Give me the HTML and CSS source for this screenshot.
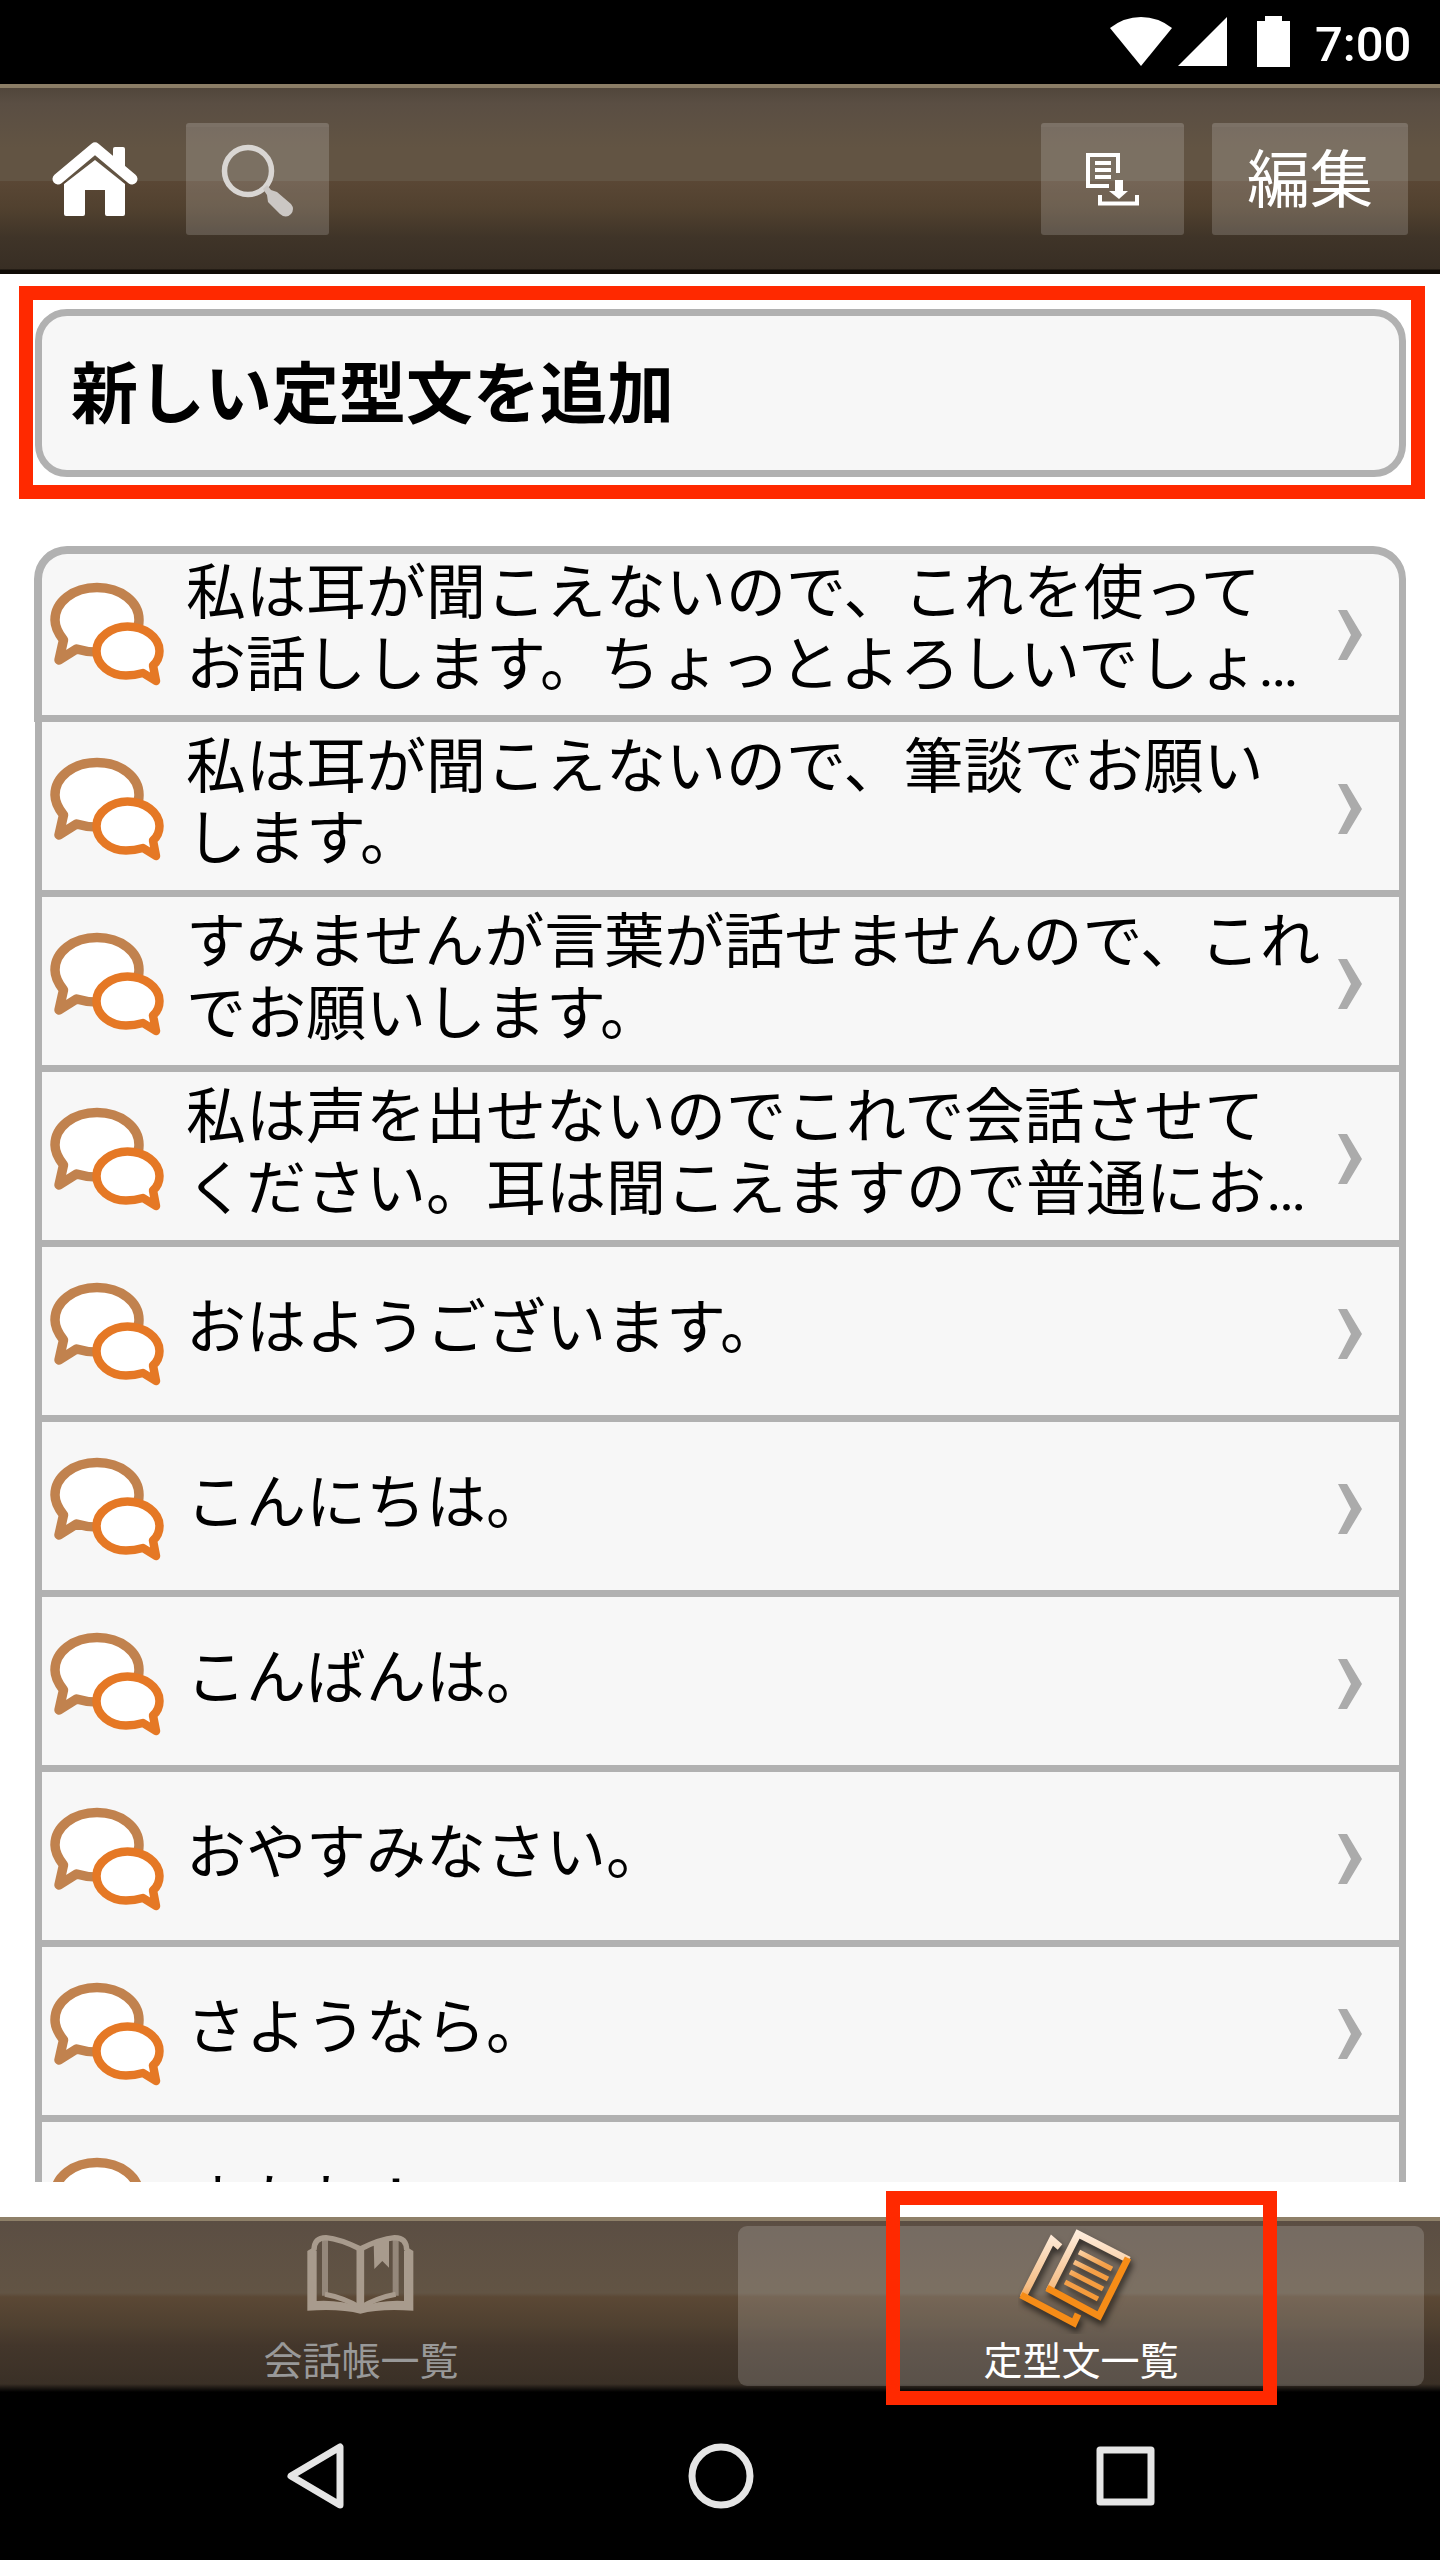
FILE: index.html
```html
<!DOCTYPE html>
<html lang="ja">
<head>
<meta charset="utf-8">
<title>定型文一覧</title>
<link rel="stylesheet" href="styles.css">
</head>
<body>
<svg class="defs" aria-hidden="true">
  <symbol id="bubbles" viewBox="0 0 160 160">
    <g fill="#fff" stroke-linejoin="round">
      <path d="M33.500 80C28 73 25 67 25 60C25 42 43 27.500 67 27.500C91 27.500 109 42 109 60C109 78 91 92 67 92C60 92 53 91 46.500 89L29 100Z" stroke="#c1824e" stroke-width="9.500"/>
      <path d="M97.500 66.500C82 66.500 66.500 77 66.500 91C66.500 105 80 115.500 96 115.500C102 115.500 108 114.500 113 113L126 121L123 105.500C127 102 129.500 97 129.500 91C129.500 77 114 66.500 97.500 66.500Z" stroke="#e57825" stroke-width="8.500"/>
    </g>
  </symbol>
  <symbol id="chevron" viewBox="0 0 26 52">
    <path d="M1 1H10L25 26L10 51H1L14 26Z" fill="#ababab"/>
  </symbol>
</svg>
<div class="screen">
  <div class="status">
    <svg class="status-icons" width="182" height="54" viewBox="0 0 182 54" fill="#fff">
      <path d="M0 12Q14 1 31 1T62 12L31 50Z"/>
      <path d="M68 50L117 1V50Z"/>
      <path d="M147 5H155V0H172V5H180V51H147Z"/>
    </svg>
    <span class="clock">7:00</span>
  </div>

  <header class="header">
    <svg class="home" width="86" height="76" viewBox="0 0 86 76" fill="#fff">
      <path d="M6 37L43 6L80 37" fill="none" stroke="#fff" stroke-width="11" stroke-linecap="round" stroke-linejoin="round"/>
      <path d="M61 7Q61 5 63 5H71Q73 5 73 7V32L61 22Z"/>
      <path d="M43 18L73 42V72Q73 74 71 74H55Q53 74 53 72V48H33V72Q33 74 31 74H14Q12 74 12 72V42Z"/>
    </svg>
    <button class="btn btn-search">
      <svg width="76" height="76" viewBox="0 0 76 76">
        <circle cx="28" cy="28" r="23.500" fill="none" stroke="#d9d6d3" stroke-width="5.500"/>
        <path d="M43 46L47 42L51 47L57 49L71 61Q75 66 71 71Q66 76 60 71L48 59L47 52Z" fill="#cbc7c4"/>
      </svg>
    </button>
    <span class="spacer"></span>
    <button class="btn btn-import">
      <svg width="54" height="54" viewBox="0 0 54 54" fill="none" stroke="#fff">
        <path d="M23 33H2V2H32V20" stroke-width="4"/>
        <path d="M9 10H25M9 17H25M9 24H25" stroke-width="4"/>
        <path d="M14 42V50.500H51V42" stroke-width="4"/>
        <path d="M29 27H37V38H42L33 46L23 38H29Z" fill="#fff" stroke="none"/>
      </svg>
    </button>
    <button class="btn btn-edit">編集</button>
  </header>

  <main class="main">
    <div class="add">新しい定型文を追加</div>
    <ul class="list">
      <li class="row first"><svg class="ico"><use href="#bubbles"/></svg><p>私は耳が聞こえないので、これを使って<br>お話しします。ちょっとよろしいでしょ<span class="dots">…</span></p><svg class="chev"><use href="#chevron"/></svg></li>
      <li class="row"><svg class="ico"><use href="#bubbles"/></svg><p>私は耳が聞こえないので、筆談でお願い<br>します。</p><svg class="chev"><use href="#chevron"/></svg></li>
      <li class="row"><svg class="ico"><use href="#bubbles"/></svg><p>すみませんが言葉が話せませんので、これ<br>でお願いします。</p><svg class="chev"><use href="#chevron"/></svg></li>
      <li class="row"><svg class="ico"><use href="#bubbles"/></svg><p>私は声を出せないのでこれで会話させて<br>ください。耳は聞こえますので普通にお<span class="dots">…</span></p><svg class="chev"><use href="#chevron"/></svg></li>
      <li class="row"><svg class="ico"><use href="#bubbles"/></svg><p>おはようございます。</p><svg class="chev"><use href="#chevron"/></svg></li>
      <li class="row"><svg class="ico"><use href="#bubbles"/></svg><p>こんにちは。</p><svg class="chev"><use href="#chevron"/></svg></li>
      <li class="row"><svg class="ico"><use href="#bubbles"/></svg><p>こんばんは。</p><svg class="chev"><use href="#chevron"/></svg></li>
      <li class="row"><svg class="ico"><use href="#bubbles"/></svg><p>おやすみなさい。</p><svg class="chev"><use href="#chevron"/></svg></li>
      <li class="row"><svg class="ico"><use href="#bubbles"/></svg><p>さようなら。</p><svg class="chev"><use href="#chevron"/></svg></li>
      <li class="row"><svg class="ico"><use href="#bubbles"/></svg><p>またね！</p><svg class="chev"><use href="#chevron"/></svg></li>
    </ul>
  </main>

  <nav class="tabs">
    <div class="tab">
      <svg class="book" width="120" height="95" viewBox="0 0 360 285" fill="none" stroke="#a89b8d">
        <path d="M22 78L38 68L50 78V228Q120 224 181 246Q245 224 312 228V78L324 68L340 78V257Q240 250 181 266Q120 250 22 257Z" fill="#a89b8d" stroke="none"/>
        <path d="M75 42V212M287 42V212" stroke="#94877a" stroke-width="18"/>
        <path d="M42 76Q42 38 78 38Q120 42 181 72Q240 42 284 38Q320 38 320 76" stroke-width="16"/>
        <path d="M75 208Q130 218 181 248Q232 218 287 208" stroke-width="15"/>
        <path d="M181 68V256" stroke-width="23"/>
        <path d="M221 50L267 36V128L247 108L223 132Z" fill="#a89b8d" stroke="none"/>
      </svg>
      <span>会話帳一覧</span>
    </div>
    <div class="tab active">
      <svg class="docs" width="122" height="108" viewBox="0 0 122 108">
        <defs>
          <linearGradient id="paper" gradientUnits="userSpaceOnUse" x1="0" y1="6" x2="0" y2="74"><stop offset="0" stop-color="#feeddd"/><stop offset=".8" stop-color="#f5bd85"/><stop offset="1" stop-color="#f39a40"/></linearGradient>
          <linearGradient id="lines" gradientUnits="userSpaceOnUse" x1="55" y1="25" x2="75" y2="70"><stop offset="0" stop-color="#fbd7b0"/><stop offset=".5" stop-color="#f4a04a"/><stop offset="1" stop-color="#f59a38"/></linearGradient>
        </defs>
        <g class="papers" fill="none" stroke-width="7">
          <path d="M5 71L34 14L42 21" stroke="url(#paper)"/>
          <path d="M3 69L56 97L60 88" stroke="#f68c17"/>
          <path d="M31 65L60 8L111 34" stroke="url(#paper)"/>
          <path d="M110 32L81 90L29 62" stroke="#f68c17"/>
          <path d="M61 26L94 43M56 36L90 53M52 46L85 63M47 56L80 73" stroke="url(#lines)" stroke-width="5"/>
        </g>
      </svg>
      <span>定型文一覧</span>
    </div>
  </nav>

  <footer class="softkeys">
    <svg width="60" height="68" viewBox="0 0 60 68"><path d="M54 5V63L5 34Z"/></svg>
    <svg width="68" height="68" viewBox="0 0 68 68"><circle cx="34" cy="34" r="29"/></svg>
    <svg width="60" height="60" viewBox="0 0 60 60"><rect x="4" y="4" width="51" height="52"/></svg>
  </footer>

  <div class="mark mark-add"></div>
  <div class="mark mark-tab"></div>
</div>
</body>
</html>
```
FILE: styles.css
```css
* { box-sizing: border-box; }
body {
  margin: 0;
  background: #fff;
  font-family: "Noto Sans CJK JP", sans-serif;
  color: #000;
}
svg { display: block; flex: none; }
.defs { position: absolute; width: 0; height: 0; }
.screen {
  position: relative;
  display: flex;
  flex-direction: column;
  width: 1440px;
  height: 2560px;
  overflow: hidden;
}
.status {
  display: flex;
  justify-content: flex-end;
  height: 84px;
  padding: 16px 29px 0 0;
  background: #000;
}
.clock {
  width: 96px;
  margin-left: 23px;
  font: 500 49px/57px Roboto, sans-serif;
  color: #fff;
}
.header {
  display: flex;
  align-items: flex-start;
  height: 190px;
  padding: 35px 32px 0 52px;
  border-top: 4px solid #8b7d66;
  background: linear-gradient(#51463b 0, #5a4e43 16px, #625443 60px, #625443 93px, #5a4735 93px, #51412f 120px, #3f3428 150px, #382e24 181px, #0f0b06 182px, #0f0b06 186px);
}
.home { margin-top: 19px; }
.btn {
  display: flex;
  align-items: center;
  justify-content: center;
  height: 112px;
  padding: 0;
  border: 0;
  border-top: 4px solid rgba(255, 255, 255, .03);
  border-radius: 3px;
  background: rgba(255, 255, 255, .165);
  color: #fff;
}
.btn-search { width: 143px; margin-left: 48px; }
.btn-import { width: 143px; margin-right: 28px; padding-bottom: 3px; }
.btn-edit { width: 196px; padding-bottom: 13px; font: 400 63px/1 "Noto Sans CJK JP", sans-serif; }
.spacer { flex: 1; }
.main {
  display: flex;
  flex-direction: column;
  height: 1908px;
  padding: 35px 34px 0;
  overflow: hidden;
}
.add {
  flex: none;
  display: flex;
  align-items: center;
  height: 168px;
  margin: 0 0 0 1px;
  padding: 0 0 10px 29px;
  border: 7px solid #b1b1b1;
  border-radius: 32px;
  background: #f7f7f7;
  font-size: 67px;
  font-weight: 700;
  line-height: 1;
}
.list { flex: none; margin: 69px 0 0; padding: 0; list-style: none; }
.row {
  display: flex;
  align-items: center;
  height: 175px;
  margin-left: 1px;
  border: solid #b1b1b1;
  border-width: 0 7px 7px;
  background: #f7f7f7;
}
.row p {
  flex: 1;
  margin: 0 0 16px -4px;
  font-size: 60px;
  line-height: 72px;
  white-space: nowrap;
}
.dots { font-family: Roboto, sans-serif; line-height: 0; }
.ico { width: 160px; height: 160px; margin: 18px 0 0 -12px; }
.chev { width: 26px; height: 52px; margin: 6px 36px 0 0; }
.row.first {
  height: 176px;
  margin-left: 0;
  border-width: 8px 7px 7px 8px;
  border-radius: 33px 33px 0 0;
}
.first p { margin-bottom: 22px; }
.first .ico { margin-top: 11px; }
.first .chev { margin-top: 0; }
.tabs {
  display: flex;
  height: 175px;
  margin-top: 35px;
  padding: 5px 16px 6px 0;
  border-top: 4px solid #8e8068;
  background: linear-gradient(#5b4e43 0, #625444 72px, #5b4835 76px, #4f4030 104px, #43362b 125px, #3a3026 163px, #000 171px);
}
.tab {
  display: flex;
  flex-direction: column;
  align-items: center;
  flex: none;
  width: 722px;
  font-size: 39px;
  line-height: 40px;
  color: #999;
}
.book { margin: -1px 2px 0 0; }
.tab span { margin-top: 18px; }
.tab.active {
  width: 686px;
  margin-left: 16px;
  border-radius: 9px;
  background: rgba(255, 255, 255, .165);
  color: #fff;
}
.tab.active span { margin-top: 4px; }
.docs { margin-right: 4px; }
.papers { filter: drop-shadow(2px 5px 3px rgba(0, 0, 0, .6)); }
.softkeys {
  display: flex;
  align-items: center;
  gap: 341px;
  height: 168px;
  padding: 0 0 0 286px;
  background: #000;
}
.softkeys svg { fill: none; stroke: #e5e5e5; stroke-width: 7; stroke-linejoin: round; }
.mark { position: absolute; border: 14px solid #ff2900; }
.mark-add { left: 19px; top: 286px; width: 1406px; height: 213px; }
.mark-tab { left: 886px; top: 2191px; width: 391px; height: 214px; }
```
